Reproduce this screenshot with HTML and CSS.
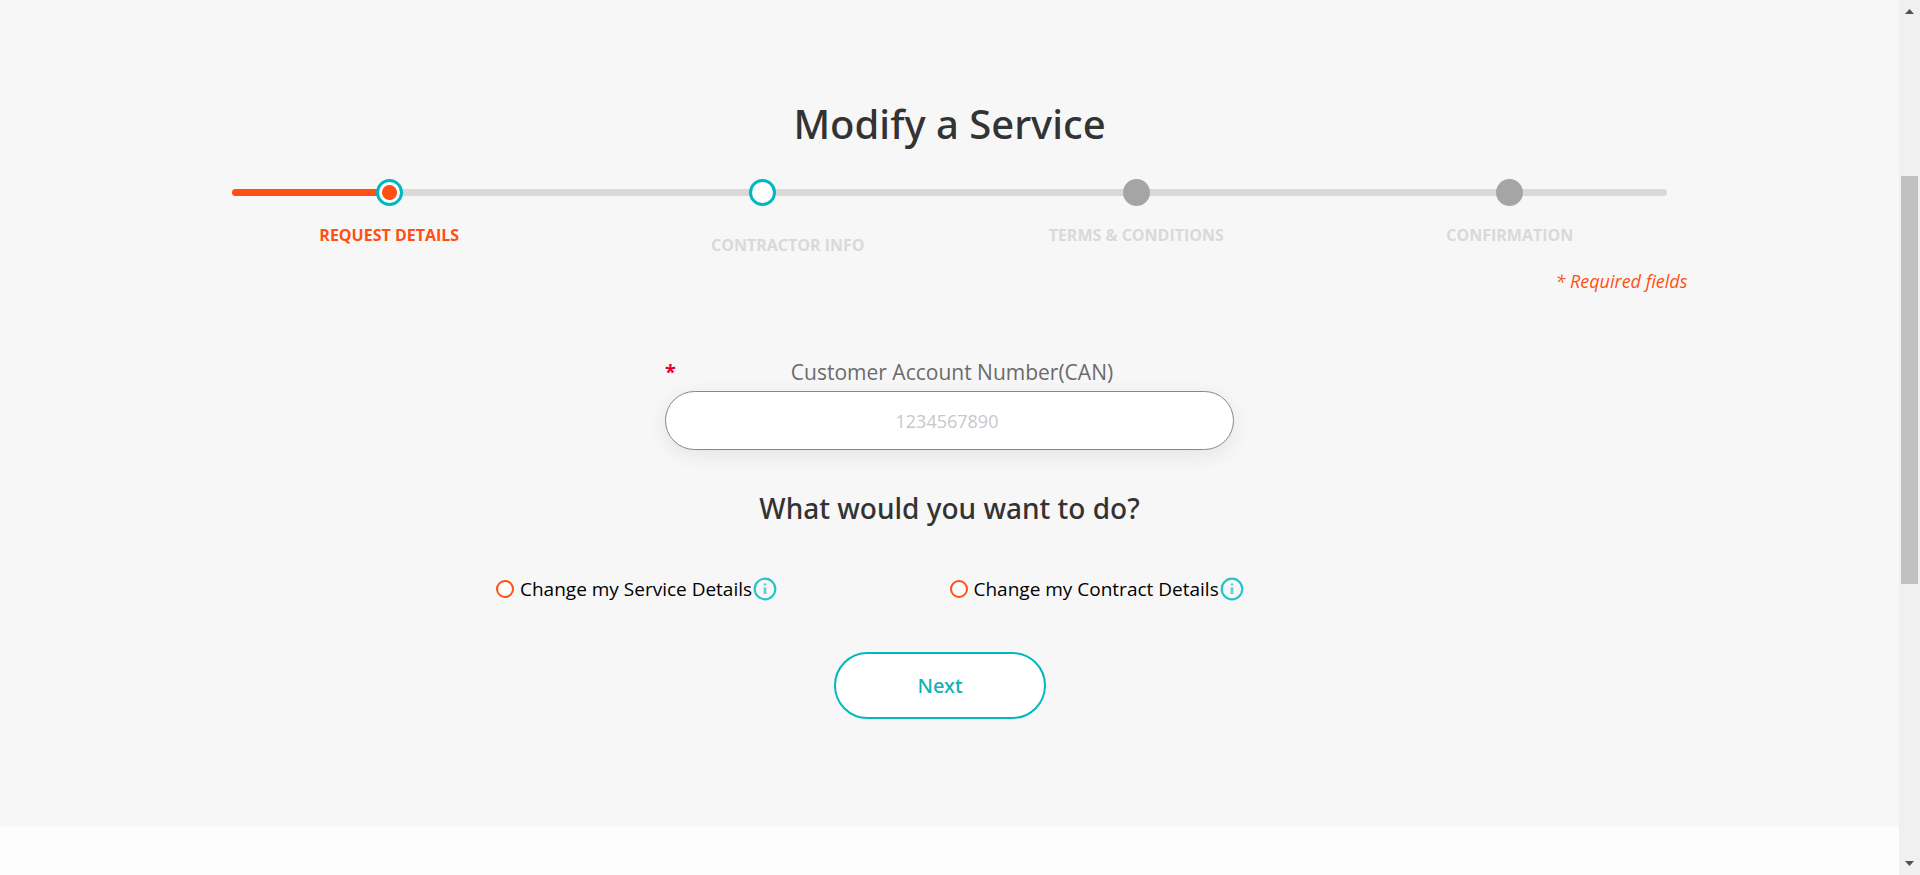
FILE: index.html
```html
<!DOCTYPE html>
<html lang="en">
<head>
<meta charset="utf-8">
<title>Modify a Service</title>
<link rel="stylesheet" href="styles.css">
</head>
<body>
<div class="shell">
  <main class="page">
    <section class="request">
      <h1 class="title">Modify a Service</h1>
      <div class="progress">
        <div class="track"><div class="track-fill"></div></div>
        <ol class="steps">
          <li class="step step-current"><span class="dot"></span><span class="step-label">REQUEST DETAILS</span></li>
          <li class="step step-next"><span class="dot"></span><span class="step-label">CONTRACTOR INFO</span></li>
          <li class="step"><span class="dot"></span><span class="step-label">TERMS &amp; CONDITIONS</span></li>
          <li class="step"><span class="dot"></span><span class="step-label">CONFIRMATION</span></li>
        </ol>
      </div>
      <p class="required-note">* Required fields</p>
      <form class="form">
        <div class="field">
          <div class="field-head">
            <span class="asterisk">*</span>
            <label class="field-label" for="can">Customer Account Number(CAN)</label>
          </div>
          <input class="field-input" id="can" type="text" placeholder="1234567890" required>
        </div>
        <h2 class="question">What would you want to do?</h2>
        <div class="options">
          <div class="option">
            <input class="radio" type="radio" name="change" id="service">
            <label class="option-label" for="service">Change my Service Details</label>
            <svg class="info" viewBox="0 0 24 24" aria-hidden="true"><circle cx="12" cy="12" r="10.3" fill="none" stroke="#27c3c8" stroke-width="2.2"/><path d="M12 6.6v2M12 10.5v6.5" stroke="#5fd0d4" stroke-width="2.8"/></svg>
          </div>
          <div class="option">
            <input class="radio" type="radio" name="change" id="contract">
            <label class="option-label" for="contract">Change my Contract Details</label>
            <svg class="info" viewBox="0 0 24 24" aria-hidden="true"><circle cx="12" cy="12" r="10.3" fill="none" stroke="#27c3c8" stroke-width="2.2"/><path d="M12 6.6v2M12 10.5v6.5" stroke="#5fd0d4" stroke-width="2.8"/></svg>
          </div>
        </div>
        <button class="next" type="button">Next</button>
      </form>
    </section>
  </main>
  <div class="scrollbar" aria-hidden="true">
    <svg class="arrow" viewBox="0 0 9 5"><path d="M0 5 4.5 0 9 5z" fill="#505050"/></svg>
    <div class="rail"><div class="thumb"></div></div>
    <svg class="arrow" viewBox="0 0 9 5"><path d="M0 0 4.5 5 9 0z" fill="#505050"/></svg>
  </div>
</div>
</body>
</html>
```
FILE: styles.css
```css
* { box-sizing: border-box; }

body {
  margin: 0;
  font-family: "Open Sans", "Noto Sans", sans-serif;
  color: #333;
  background: #fdfdfd;
}

.shell { display: flex; min-height: 100vh; }
.page { flex: 1; min-width: 0; }

.request {
  display: flex;
  flex-direction: column;
  align-items: center;
  padding: 96px 24px 108px;
  background: #f7f7f7;
}

.title {
  margin: 0;
  font-family: "Noto Sans", "Open Sans", sans-serif;
  font-size: 40px;
  line-height: 56px;
  font-weight: 500;
}

.progress {
  position: relative;
  width: 100%;
  max-width: 1494px;
  margin-top: 27px;
}

.track {
  position: absolute;
  top: 10px;
  left: 2%;
  right: 2%;
  height: 7px;
  border-radius: 4px;
  background: #d9d9d9;
  overflow: hidden;
}
.track-fill { width: 11%; height: 100%; background: #ff5014; }

.steps {
  position: relative;
  display: grid;
  grid-template-columns: repeat(4, 1fr);
  margin: 0;
  padding: 0;
  list-style: none;
}
.step { display: flex; flex-direction: column; align-items: center; color: #d9d9d9; }
.dot { width: 27px; height: 27px; border-radius: 50%; background: #a5a5a5; }
.step-label {
  margin-top: 17px;
  font-size: 16px;
  line-height: 24px;
  font-weight: 700;
}
.step-current { color: #ff5014; }
.step-current .dot {
  border: 3px solid #00b8be;
  background: radial-gradient(circle, #ff5014 7px, #fff 8px);
}
.step-next .dot { border: 3px solid #00b8be; background: #fff; }
.step-next .step-label { margin-top: 27px; padding-left: 50px; }

.required-note {
  width: 100%;
  max-width: 1476px;
  margin: 12px 0 0;
  font-size: 18px;
  line-height: 24px;
  font-style: italic;
  font-weight: 400;
  text-align: right;
  color: #ff5014;
}

.form {
  display: flex;
  flex-direction: column;
  align-items: center;
  width: 100%;
  max-width: 907px;
  margin-top: 64px;
}

.field { width: 100%; max-width: 569px; }
.field-head { display: flex; padding-bottom: 4px; }
.asterisk { width: 5px; font-size: 20px; line-height: 30px; font-weight: 700; color: #e4002b; }
.field-label {
  flex: 1;
  font-size: 21px;
  line-height: 30px;
  font-weight: 400;
  text-align: center;
  color: #6b6b6b;
}
.field-input {
  display: block;
  width: 100%;
  height: 59px;
  padding: 0 30px 0 25px;
  border: 1px solid #92828a;
  border-radius: 30px;
  background: #fff;
  box-shadow: 0 5px 20px rgba(0, 0, 0, 0.08);
  font: 400 18px "Open Sans", "Noto Sans", sans-serif;
  text-align: center;
}
.field-input::placeholder { color: #c8c8c8; opacity: 1; }

.question {
  margin: 38px 0 0;
  font-family: "Noto Sans", "Open Sans", sans-serif;
  font-size: 28px;
  line-height: 40px;
  font-weight: 500;
}

.options {
  display: grid;
  grid-template-columns: 1fr 1fr;
  width: 100%;
  margin-top: 46px;
}
.option { display: flex; align-items: center; color: #000; }
.radio {
  appearance: none;
  width: 18px;
  height: 18px;
  margin: 0 6px 0 0;
  border: 2px solid #ff5014;
  border-radius: 50%;
  background: #fff;
}
.radio:checked { background: radial-gradient(circle, #ff5014 4px, #fff 5px); }
.option-label { font-size: 19px; line-height: 30px; font-weight: 400; }
.info { width: 24px; height: 24px; margin-left: 1px; }

.next {
  width: 212px;
  height: 67px;
  margin: 48px 19px 0 0;
  border: 2px solid #00b8be;
  border-radius: 34px;
  background: #fff;
  font: 500 20px "Noto Sans", "Open Sans", sans-serif;
  color: #13b0b4;
}

.scrollbar {
  display: flex;
  flex-direction: column;
  align-items: center;
  width: 21px;
  padding: 9px 2px;
  background: #f0f0f0;
}
.arrow { width: 9px; height: 5px; }
.rail { flex: 1; width: 100%; padding: 162px 0; }
.thumb { height: 408px; background: #c1c1c1; }
```
